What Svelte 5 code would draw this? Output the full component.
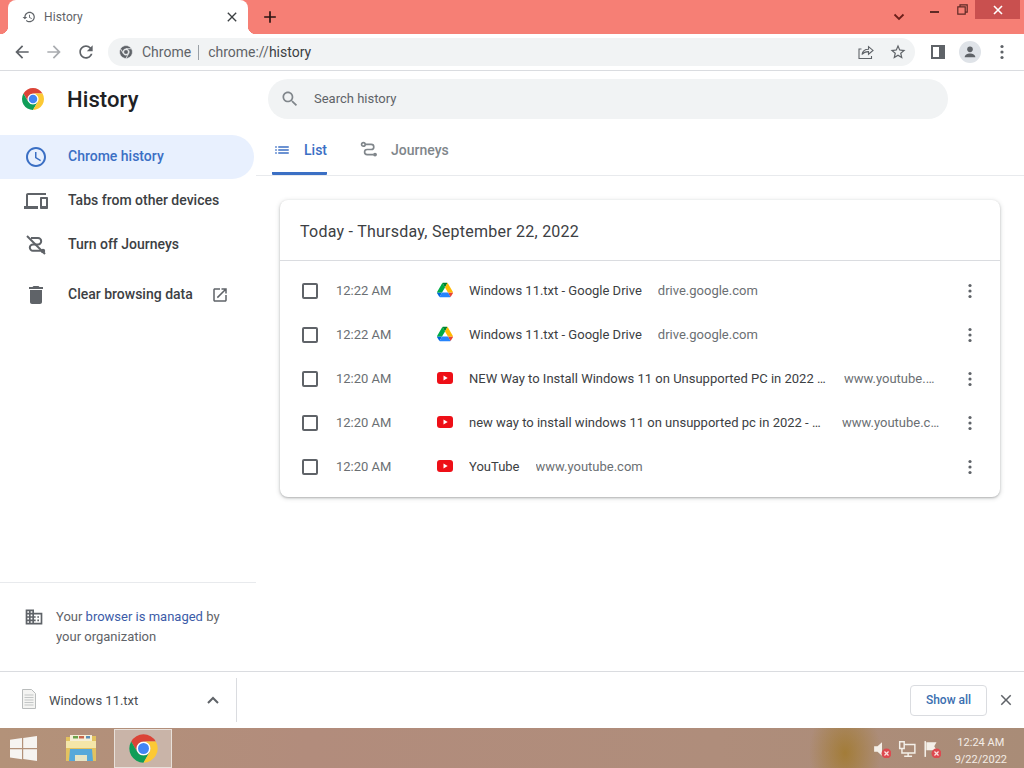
<script>
  const drive = 'drive';
  const yt = 'yt';
  const rows = [
    { time: '12:22 AM', icon: drive, title: 'Windows 11.txt - Google Drive', domain: 'drive.google.com' },
    { time: '12:22 AM', icon: drive, title: 'Windows 11.txt - Google Drive', domain: 'drive.google.com' },
    { time: '12:20 AM', icon: yt, title: 'NEW Way to Install Windows 11 on Unsupported PC in 2022 (No Data Loss Guide)', domain: 'www.youtube.com', titleWidth: 359, domainWidth: 96 },
    { time: '12:20 AM', icon: yt, title: 'new way to install windows 11 on unsupported pc in 2022 - YouTube search', domain: 'www.youtube.com', titleWidth: 357, domainWidth: 98 },
    { time: '12:20 AM', icon: yt, title: 'YouTube', domain: 'www.youtube.com' }
  ];
</script>

{#snippet chrome(cls)}
  <svg class={cls} viewBox="0 0 48 48">
    <circle cx="24" cy="24" r="11" fill="#fff" />
    <path fill="#db4437" d="M4.95 13A22 22 0 0 1 43.05 13H24A11 11 0 0 0 14.47 29.5Z" />
    <path fill="#0f9d58" d="M4.95 13A22 22 0 0 0 24 46L33.53 29.5A11 11 0 0 1 14.47 29.5Z" />
    <path fill="#fcc934" d="M43.05 13A22 22 0 0 1 24 46L33.53 29.5A11 11 0 0 0 24 13Z" />
    <circle cx="24" cy="24" r="8.5" fill="#4285f4" />
  </svg>
{/snippet}

{#snippet icon(cls, d)}
  <svg class={cls} viewBox="0 0 24 24"><path d={d} /></svg>
{/snippet}

{#snippet dots()}
  <svg class="dots" viewBox="0 0 4 16"><circle cx="2" cy="2.5" r="1.6" /><circle cx="2" cy="8" r="1.6" /><circle cx="2" cy="13.5" r="1.6" /></svg>
{/snippet}

{#snippet redx()}
  <circle cx="12" cy="12" r="4.4" fill="#dd4a50" /><path d="M10.2 10.2l3.6 3.6M13.8 10.2l-3.6 3.6" stroke="#fbe4e2" stroke-width="1.1" />
{/snippet}

<div class="app">
  <header class="strip">
    <div class="tab">
      {@render icon('ico14 grey', 'M13 3c-4.97 0-9 4.03-9 9H1l3.89 3.89.07.14L9 12H6c0-3.87 3.13-7 7-7s7 3.13 7 7-3.13 7-7 7c-1.93 0-3.68-.79-4.94-2.06l-1.42 1.42C8.27 19.99 10.51 21 13 21c4.97 0 9-4.03 9-9s-4.03-9-9-9zm-1 5v5l4.28 2.54.72-1.21-3.5-2.08V8H12z')}
      <span class="tab-title">History</span>
      {@render icon('ico16 dark tab-x', 'M19 6.41L17.59 5 12 10.59 6.41 5 5 6.41 10.59 12 5 17.59 6.41 19 12 13.41 17.59 19 19 17.59 13.41 12z')}
    </div>
    {@render icon('ico20 black plus', 'M19 13h-6v6h-2v-6H5v-2h6V5h2v6h6v2z')}
    <svg class="chev" viewBox="0 0 12 8"><path d="M1.5 1.5L6 6l4.5-4.5" fill="none" stroke="#6b1f1a" stroke-width="1.8" /></svg>
    <div class="min"></div>
    <svg class="restore" viewBox="0 0 11 11"><path d="M3 2.5V.8h7.2v7.4H8.4M.8 2.8h7.4v7.4H.8z" fill="none" stroke="#5e2a26" stroke-width="1.2" /></svg>
    <div class="close">
      <svg viewBox="0 0 10 10"><path d="M1 1l8 8M9 1l-8 8" stroke="#fff" stroke-width="1.6" /></svg>
    </div>
  </header>

  <nav class="toolbar">
    {@render icon('ico20 grey', 'M20 11H7.83l5.59-5.59L12 4l-8 8 8 8 1.41-1.41L7.83 13H20v-2z')}
    {@render icon('ico20 light fwd', 'M12 4l-1.41 1.41L16.17 11H4v2h12.17l-5.58 5.59L12 20l8-8z')}
    {@render icon('ico20 grey reload', 'M17.65 6.35C16.2 4.9 14.21 4 12 4c-4.42 0-7.99 3.58-7.99 8s3.57 8 7.99 8c3.73 0 6.84-2.55 7.73-6h-2.08c-.82 2.33-3.04 4-5.65 4-3.31 0-6-2.69-6-6s2.69-6 6-6c1.66 0 3.14.69 4.22 1.78L13 11h7V4l-2.35 2.35z')}
    <div class="omni">
      <svg class="omni-logo" viewBox="0 0 48 48">
        <path d="M4.95 13A22 22 0 0 1 43.05 13H24A11 11 0 0 0 14.47 29.5Z" />
        <path d="M4.95 13A22 22 0 0 0 24 46L33.53 29.5A11 11 0 0 1 14.47 29.5Z" />
        <path d="M43.05 13A22 22 0 0 1 24 46L33.53 29.5A11 11 0 0 0 24 13Z" />
        <circle cx="24" cy="24" r="8" />
      </svg>
      <span class="omni-chip">Chrome</span>
      <span class="omni-sep"></span>
      <span class="omni-url">chrome://<b>history</b></span>
      <svg class="share" viewBox="0 0 16 16"><path d="M3.5 5H1v9.5h12.5V12M4 10.5C4.5 7 7.5 5.2 10.5 5.2V2.6L15 6.4l-4.5 3.8V7.6C8 7.5 5.5 8.5 4 10.5z" fill="none" stroke="#5f6368" stroke-width="1.1" /></svg>
      {@render icon('ico18 grey star', 'M22 9.24l-7.19-.62L12 2 9.19 8.63 2 9.24l5.46 4.73L5.82 21 12 17.27 18.18 21l-1.63-7.03L22 9.24zM12 15.4l-3.76 2.27 1-4.28-3.32-2.88 4.38-.38L12 6.1l1.71 4.04 4.38.38-3.32 2.88 1 4.28L12 15.4z')}
    </div>
    <svg class="panel" viewBox="0 0 14 14"><path fill-rule="evenodd" fill="#5f6368" d="M0 0h14v14H0zM2 2v10h6V2z" /></svg>
    <div class="avatar">
      <svg viewBox="0 0 24 24"><circle cx="12" cy="8" r="4.2" fill="#5f6368" /><path fill="#5f6368" d="M4 20c0-4 4-5.8 8-5.8s8 1.8 8 5.8z" /></svg>
    </div>
    {@render dots()}
  </nav>

  <main class="page">
    <aside class="side">
      <div class="brand">
        {@render chrome('brand-logo')}
        <h1>History</h1>
      </div>
      <ul class="menu">
        <li class="item active">
          {@render icon('ico24 blue', 'M11.99 2C6.47 2 2 6.48 2 12s4.47 10 9.99 10C17.52 22 22 17.52 22 12S17.52 2 11.99 2zM12 20c-4.42 0-8-3.58-8-8s3.58-8 8-8 8 3.58 8 8-3.58 8-8 8zm.5-13H11v6l5.25 3.15.75-1.23-4.5-2.67z')}
          <span>Chrome history</span>
        </li>
        <li class="item">
          {@render icon('ico24 grey', 'M4 6h18V4H4c-1.1 0-2 .9-2 2v11H0v3h14v-3H4V6zm19 2h-6c-.55 0-1 .45-1 1v10c0 .55.45 1 1 1h6c.55 0 1-.45 1-1V9c0-.55-.45-1-1-1zm-1 9h-4v-7h4v7z')}
          <span>Tabs from other devices</span>
        </li>
        <li class="item">
          <svg class="ico24 route" viewBox="0 0 24 24">
            <path d="M7 5h7a3.2 3.2 0 0 1 0 6.4h-5a3.2 3.2 0 0 0 0 6.4h8" />
            <circle class="node" cx="19" cy="18" r="2.2" />
            <path d="M3 3l18 18" />
          </svg>
          <span>Turn off Journeys</span>
        </li>
        <li class="item clear">
          {@render icon('ico24 grey', 'M6 19c0 1.1.9 2 2 2h8c1.1 0 2-.9 2-2V7H6v12zM19 4h-3.5l-1-1h-5l-1 1H5v2h14V4z')}
          <span>Clear browsing data</span>
          {@render icon('ico20 grey ext', 'M19 19H5V5h7V3H5c-1.11 0-2 .9-2 2v14c0 1.1.89 2 2 2h14c1.1 0 2-.9 2-2v-7h-2v7zM14 3v2h3.59l-9.83 9.83 1.41 1.41L19 6.41V10h2V3h-7z')}
        </li>
      </ul>
      <div class="managed">
        {@render icon('ico20 grey biz', 'M12 7V3H2v18h20V7H12zM6 19H4v-2h2v2zm0-4H4v-2h2v2zm0-4H4V9h2v2zm0-4H4V5h2v2zm4 12H8v-2h2v2zm0-4H8v-2h2v2zm0-4H8V9h2v2zm0-4H8V5h2v2zm10 12h-8v-2h2v-2h-2v-2h2v-2h-2V9h8v10zm-2-8h-2v2h2v-2zm0 4h-2v2h2v-2z')}
        <p>Your <a href="#top">browser is managed</a> by your organization</p>
      </div>
    </aside>

    <section class="content">
      <div class="search">
        {@render icon('ico20 mid', 'M15.5 14h-.79l-.28-.27C15.41 12.59 16 11.11 16 9.5 16 5.91 13.09 3 9.5 3S3 5.91 3 9.5 5.91 16 9.5 16c1.61 0 3.09-.59 4.23-1.57l.27.28v.79l5 4.99L20.49 19l-4.99-5zm-6 0C7.01 14 5 11.99 5 9.5S7.01 5 9.5 5 14 7.01 14 9.5 11.99 14 9.5 14z')}
        <span>Search history</span>
      </div>
      <div class="tabs">
        <div class="tb on">
          {@render icon('ico18 blue', 'M3 13h2v-2H3v2zm0 4h2v-2H3v2zm0-8h2V7H3v2zm4 4h14v-2H7v2zm0 4h14v-2H7v2zM7 7v2h14V7H7z')}
          <span>List</span>
        </div>
        <div class="tb">
          <svg class="ico18 route2" viewBox="0 0 24 24">
            <circle cx="4.5" cy="4.5" r="2.4" />
            <path d="M7 4.5h8a3.4 3.4 0 0 1 0 6.8H9.5a3.4 3.4 0 0 0 0 6.8H18" />
            <circle class="node" cx="20" cy="18.1" r="2.6" />
          </svg>
          <span>Journeys</span>
        </div>
      </div>
      <div class="card">
        <h2>Today - Thursday, September 22, 2022</h2>
        <div class="rows">
          {#each rows as r}
            <div class="row">
              <span class="check"></span>
              <span class="time">{r.time}</span>
              {#if r.icon === 'drive'}
                <svg class="fav" viewBox="0 0 87.3 78">
                  <path d="m6.6 66.85 3.85 6.65c.8 1.4 1.95 2.5 3.3 3.3l13.75-23.8h-27.5c0 1.55.4 3.1 1.2 4.5z" fill="#0066da" />
                  <path d="m43.65 25-13.75-23.8c-1.35.8-2.5 1.9-3.3 3.3l-25.4 44a9.06 9.06 0 0 0 -1.2 4.5h27.5z" fill="#00ac47" />
                  <path d="m73.55 76.8c1.35-.8 2.5-1.9 3.3-3.3l1.6-2.75 7.65-13.25c.8-1.4 1.2-2.95 1.2-4.5h-27.502l5.852 11.5z" fill="#ea4335" />
                  <path d="m43.65 25 13.75-23.8c-1.35-.8-2.9-1.2-4.5-1.2h-18.5c-1.6 0-3.15.45-4.5 1.2z" fill="#00832d" />
                  <path d="m59.8 53h-32.3l-13.75 23.8c1.35.8 2.9 1.2 4.5 1.2h50.8c1.6 0 3.15-.45 4.5-1.2z" fill="#2684fc" />
                  <path d="m73.4 26.5-12.7-22c-.8-1.4-1.95-2.5-3.3-3.3l-13.75 23.8 16.15 28h27.45c0-1.55-.4-3.1-1.2-4.5z" fill="#ffba00" />
                </svg>
              {:else}
                <svg class="fav" viewBox="0 0 16 16">
                  <rect x="0" y="2" width="16" height="12" rx="3" fill="#ee0f17" />
                  <path d="M6.5 5.5v5L10.7 8z" fill="#fff" />
                </svg>
              {/if}
              <div class="entry">
                <span class="title" style:width={r.titleWidth ? r.titleWidth + 'px' : null}>{r.title}</span>
                <span class="domain" style:width={r.domainWidth ? r.domainWidth + 'px' : null}>{r.domain}</span>
              </div>
              {@render dots()}
            </div>
          {/each}
        </div>
      </div>
    </section>
  </main>

  <footer class="downloads">
    <svg class="file" viewBox="0 0 14 20">
      <path d="M.5.5h9l4 4v15H.5z" fill="#f4f4f2" stroke="#b9bcbc" />
      <path d="M2.5 6h9M2.5 8.5h9M2.5 11h9M2.5 13.5h9M2.5 16h9" stroke="#c3c6c6" />
    </svg>
    <span class="fname">Windows 11.txt</span>
    <svg class="caret" viewBox="0 0 12 8"><path d="M1 7l5-5 5 5" fill="none" stroke="#5f6368" stroke-width="2" /></svg>
    <span class="dl-sep"></span>
    <button class="showall">Show all</button>
    {@render icon('ico18 grey dl-x', 'M19 6.41L17.59 5 12 10.59 6.41 5 5 6.41 10.59 12 5 17.59 6.41 19 12 13.41 17.59 19 19 17.59 13.41 12z')}
  </footer>

  <div class="taskbar">
    <svg class="win" viewBox="0 0 27 25">
      <path fill="#f6f4f1" d="M0 3.8l12-1.7v10H0zM13.2 1.9L27 0v12.1H13.2zM0 13.2h12v10L0 21.6zM13.2 13.2H27V25l-13.8-1.9z" />
    </svg>
    <svg class="folder" viewBox="0 0 32 30">
      <path d="M1 4h12l2-1h16v25H1z" fill="#e3c25f" />
      <path d="M5 2h22v6H5z" fill="#f5efd6" />
      <path d="M8 3h5v2.5H8z" fill="#6ca24c" /><path d="M14 3h5v2.5h-5z" fill="#c8674a" /><path d="M21 3h4v2.5h-4z" fill="#5b8fb5" />
      <path d="M1 8h30v7H1z" fill="#f4e6a8" />
      <path d="M4 28l1-12h22l1 12h-6v-6H10v6z" fill="#56a8da" />
      <path d="M10 22h12v6H10z" fill="#e6e4c4" />
    </svg>
    <div class="task-chrome">{@render chrome('task-logo')}</div>
    <div class="tray">
      <svg class="tray-ico" viewBox="0 0 16 16"><path d="M1 5.5h3L8 2v12L4 10.5H1z" fill="#f4efe8" />{@render redx()}</svg>
      <svg class="tray-ico" viewBox="0 0 16 16"><path d="M1.5 1.5h4v6h-4zM5.5 4H15v7.5H3.5V7.5M9 11.5v2.5M5.5 14.5h7" fill="none" stroke="#f4efe8" stroke-width="1.3" /></svg>
      <svg class="tray-ico" viewBox="0 0 16 16"><path d="M2 1v14" stroke="#f4efe8" stroke-width="1.4" /><path d="M3 2h9l-2 3.5 2 3.5H3z" fill="#f4efe8" />{@render redx()}</svg>
    </div>
    <div class="clock"><span>12:24 AM</span><span>9/22/2022</span></div>
  </div>
</div>

<style>
  :global(body) { margin: 0; background: #fff; }
  .app { width: 1024px; height: 768px; display: flex; flex-direction: column; overflow: hidden; font-family: Roboto, "Liberation Sans", sans-serif; color: #3c4043; }
  svg { display: block; flex: none; }
  h1, h2, p, ul { margin: 0; padding: 0; }
  li { list-style: none; }

  .ico14 { width: 14px; height: 14px; }
  .ico16 { width: 16px; height: 16px; }
  .ico18 { width: 18px; height: 18px; }
  .ico20 { width: 20px; height: 20px; }
  .ico24 { width: 24px; height: 24px; }
  .grey { fill: #5f6368; }
  .mid { fill: #80868b; }
  .light { fill: #a9acb0; }
  .dark { fill: #3c4043; }
  .black { fill: #2b1513; }
  .blue { fill: #3b6fc4; }

  .strip { height: 34px; flex: none; background: #f67f75; display: flex; align-items: flex-start; padding-left: 8px; }
  .tab { position: relative; width: 240px; height: 34px; background: #fff; border-radius: 8px 8px 0 0; display: flex; align-items: center; padding: 0 8px 0 14px; box-sizing: border-box; gap: 8px; }
  .tab::before, .tab::after { content: ""; position: absolute; bottom: 0; width: 8px; height: 8px; background: radial-gradient(circle at var(--cx) 0, transparent 8px, #fff 8.5px); }
  .tab::before { left: -8px; --cx: 0; }
  .tab::after { right: -8px; --cx: 8px; }
  .tab-title { font-size: 12px; color: #5f6368; letter-spacing: .1px; }
  .tab-x { margin-left: auto; }
  .plus { margin: 7px 0 0 12px; }
  .chev { width: 12px; height: 8px; margin: 13px 0 0 613px; }
  .min { width: 9px; height: 2px; margin: 11px 0 0 25px; background: #5e2a26; }
  .restore { width: 11px; height: 11px; margin: 4px 0 0 18px; }
  .close { width: 45px; height: 19px; margin-left: 7px; background: #c9504f; display: flex; align-items: center; justify-content: center; }
  .close svg { width: 10px; height: 10px; }

  .toolbar { flex: none; box-sizing: border-box; display: flex; align-items: center; padding-left: 12px; border-bottom: 1px solid #dadce0; height: 37px; }
  .fwd { margin-left: 12px; }
  .reload { margin-left: 12px; }
  .omni { width: 807px; height: 28px; margin: 0 0 0 12px; border-radius: 14px; background: #f1f3f4; display: flex; align-items: center; padding-left: 11px; box-sizing: border-box; font-size: 14px; flex: none; }
  .omni-logo { width: 14px; height: 14px; fill: #5f6368; stroke: #f1f3f4; stroke-width: 2; }
  .omni-chip { margin-left: 9px; color: #5f6368; }
  .omni-sep { width: 1px; height: 15px; background: #9aa0a6; margin: 0 9px 0 7px; }
  .omni-url { color: #5f6368; }
  .omni-url b { font-weight: 400; color: #3c4043; }
  .share { width: 16px; height: 16px; margin-left: auto; }
  .star { margin: 0 8px 0 15px; }
  .panel { width: 14px; height: 14px; margin-left: 16px; }
  .avatar { width: 22px; height: 22px; border-radius: 50%; background: #dfe3e8; margin-left: 14px; display: flex; align-items: center; justify-content: center; }
  .avatar svg { width: 16px; height: 16px; }
  .dots { width: 4px; height: 16px; fill: #5f6368; }
  .toolbar > .dots { margin-left: 19px; }

  .page { flex: 1; display: flex; min-height: 0; }
  .side { width: 256px; flex: none; display: flex; flex-direction: column; }
  .brand { height: 56px; flex: none; display: flex; align-items: center; padding-left: 21px; gap: 22px; }
  .brand-logo { width: 24px; height: 24px; }
  h1 { font-size: 22px; font-weight: 500; color: #202124; letter-spacing: .1px; }
  .menu { margin-top: 8px; font-size: 14px; font-weight: 500; color: #3c4043; }
  .item { height: 44px; width: 254px; display: flex; align-items: center; box-sizing: border-box; padding-left: 24px; gap: 20px; }
  .item span { padding-bottom: 2px; }
  .active { background: #e8f0fe; border-radius: 0 22px 22px 0; color: #3b6fc4; }
  .clear { margin-top: 6px; }
  .ext { margin-left: -2px; width: 18px; height: 18px; }
  .route, .route2 { fill: none; stroke: #5f6368; stroke-width: 2; }
  .node { fill: #5f6368; stroke: none; }
  .route2 { stroke: #80868b; stroke-width: 2.2; }
  .route2 .node { fill: #80868b; }
  .managed { margin-top: auto; height: 89px; box-sizing: border-box; border-top: 1px solid #e8eaed; display: flex; padding: 24px 24px 0 24px; gap: 12px; font-size: 13px; line-height: 20px; color: #5f6368; }
  a { color: #3b5ba8; text-decoration: none; }

  .content { flex: 1; min-width: 0; display: flex; flex-direction: column; }
  .search { width: 680px; height: 40px; margin: 8px 0 0 12px; border-radius: 20px; background: #f1f3f4; display: flex; align-items: center; padding-left: 12px; gap: 14px; box-sizing: border-box; font-size: 13px; color: #5f6368; flex: none; }
  .search span { padding-bottom: 2px; }
  .tabs { height: 57px; flex: none; box-sizing: border-box; border-bottom: 1px solid #e8eaed; display: flex; padding-left: 16px; font-size: 14px; font-weight: 500; color: #80868b; }
  .tb { height: 56px; display: flex; align-items: center; gap: 13px; box-sizing: border-box; padding: 8px 0 3px 1px; margin-left: 32px; }
  .tb:first-child { margin-left: 0; width: 55px; border-bottom: 3px solid #3b6fc4; border-radius: 0 0 1px 1px; color: #3b6fc4; padding-bottom: 0; }
  .card { margin: 24px 24px 0; height: 297px; background: #fff; border-radius: 8px; box-shadow: 0 1px 2px rgba(60,64,67,.3), 0 1px 4px 1px rgba(60,64,67,.15); flex: none; }
  h2 { height: 61px; box-sizing: border-box; border-bottom: 1px solid #dadce0; font-size: 16px; font-weight: 400; line-height: 64px; padding-left: 20px; letter-spacing: .25px; color: #3c4043; }
  .rows { padding-top: 7px; }
  .row { height: 44px; display: flex; align-items: center; padding-left: 22px; box-sizing: border-box; padding-right: 28px; font-size: 13px; }
  .check { width: 12px; height: 12px; border: 2px solid #5f6368; border-radius: 2px; flex: none; margin-top: 1px; }
  .row .dots { margin-top: 2px; }
  .time { width: 101px; margin-left: 18px; color: #6b6f73; flex: none; }
  .fav { width: 16px; height: 16px; }
  .entry { flex: 1; min-width: 0; display: flex; gap: 16px; margin: 0 28px 0 16px; }
  .title, .domain { white-space: nowrap; overflow: hidden; text-overflow: ellipsis; flex: none; }
  .title { color: #3c4043; }
  .domain { color: #6b6f73; }

  .downloads { height: 57px; flex: none; box-sizing: border-box; border-top: 1px solid #dadce0; display: flex; align-items: center; padding-left: 22px; font-size: 13px; color: #4a4e52; }
  .file { width: 14px; height: 20px; margin-top: -3px; }
  .fname { margin-left: 13px; }
  .caret { width: 12px; height: 8px; margin-left: 69px; }
  .dl-sep { width: 1px; height: 44px; background: #dadce0; margin-left: 17px; }
  .showall { margin-left: auto; width: 77px; height: 31px; padding: 0; background: #fff; border: 1px solid #dadce0; border-radius: 4px; font: 500 12px Roboto, sans-serif; color: #3b6fb0; }
  .dl-x { margin: 0 9px 0 10px; }

  .taskbar { height: 40px; flex: none; display: flex; align-items: center; padding-left: 10px; color: #f4ece6; background:
    radial-gradient(ellipse 36px 52px at 845px 25px, rgba(160,120,40,.8), transparent),
    linear-gradient(90deg, #b39279, #b28c7c 30%, #af8d7b 70%, #a98c77); }
  .win { width: 27px; height: 25px; }
  .folder { width: 32px; height: 30px; margin-left: 28px; }
  .task-chrome { width: 58px; height: 39px; margin-left: 17px; background: #c9b4a8; box-sizing: border-box; border: 1px solid #e8e0da; display: flex; align-items: center; justify-content: center; }
  .task-logo { width: 31px; height: 31px; }
  .tray { margin-left: auto; display: flex; gap: 7px; margin-top: 2px; }
  .tray-ico { width: 18px; height: 18px; }
  .clock { margin: 0 17px 0 14px; padding-top: 6px; display: flex; flex-direction: column; align-items: center; font-size: 11px; line-height: 17px; }
</style>
